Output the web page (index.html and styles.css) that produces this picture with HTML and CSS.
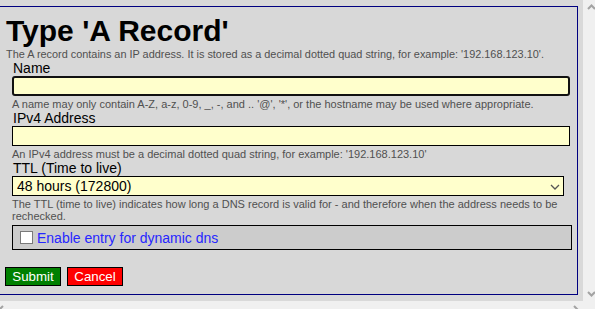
FILE: index.html
```html
<!DOCTYPE html>
<html lang="en">
<head>
    <meta charset="UTF-8">
    <title>Type 'A Record'</title>
    <link rel="stylesheet" href="styles.css">
</head>
<body>
    <div class="frame">
        <div class="viewport">
            <div class="panel">
                <h1>Type 'A Record'</h1>
                <p class="desc">The A record contains an IP address. It is stored as a decimal dotted quad string, for example: '192.168.123.10'.</p>

                <div class="fields">
                    <label class="field-label" for="name">Name</label>
                    <input type="text" id="name" class="field-input focused">
                    <p class="help">A name may only contain A-Z, a-z, 0-9, _, -, and .. '@', '*', or the hostname may be used where appropriate.</p>

                    <label class="field-label" for="ipv4">IPv4 Address</label>
                    <input type="text" id="ipv4" class="field-input">
                    <p class="help">An IPv4 address must be a decimal dotted quad string, for example: '192.168.123.10'</p>

                    <label class="field-label" for="ttl">TTL (Time to live)</label>
                    <div class="select-wrap">
                        <select id="ttl" class="field-select">
                            <option>48 hours (172800)</option>
                        </select>
                        <svg class="select-arrow" width="10" height="6" viewBox="0 0 10 6"><path d="M1 1 L5 5 L9 1" fill="none" stroke="#555" stroke-width="1.3"/></svg>
                    </div>
                    <p class="help">The TTL (time to live) indicates how long a DNS record is valid for - and therefore when the address needs to be rechecked.</p>

                    <div class="check-box">
                        <input type="checkbox" id="dyndns" class="check">
                        <label for="dyndns" class="check-label">Enable entry for dynamic dns</label>
                    </div>
                </div>

                <div class="actions">
                    <button class="btn btn-submit">Submit</button>
                    <button class="btn btn-cancel">Cancel</button>
                </div>
            </div>
        </div>

        <!-- barre de défilement verticale -->
        <div class="vscroll">
            <svg width="17" height="13" viewBox="0 0 17 13"><path d="M5 9 L8.5 5.5 L12 9" fill="none" stroke="#a3a3a3" stroke-width="2"/></svg>
            <svg width="17" height="13" viewBox="0 0 17 13"><path d="M5 4 L8.5 7.5 L12 4" fill="none" stroke="#a3a3a3" stroke-width="2"/></svg>
        </div>

        <!-- barre de défilement horizontale -->
        <div class="hscroll">
            <svg width="13" height="17" viewBox="0 0 13 17"><path d="M9 5 L5.5 8.5 L9 12" fill="none" stroke="#a3a3a3" stroke-width="2"/></svg>
            <svg width="13" height="17" viewBox="0 0 13 17"><path d="M4 5 L7.5 8.5 L4 12" fill="none" stroke="#a3a3a3" stroke-width="2"/></svg>
        </div>
        <div class="corner"></div>
    </div>
</body>
</html>
```

FILE: styles.css
```css
body {
    margin: 0;
    width: 595px;
    height: 309px;
    overflow: hidden;
    font-family: "Liberation Sans", Arial, sans-serif;
    background-color: #f0f0f0;
}
.frame {
    display: grid;
    grid-template-columns: 583px 17px;
    grid-template-rows: 301px 17px;
}
.viewport {
    background-color: #d9d9d9;
    overflow: hidden;
    padding-top: 6px;
}
.panel {
    box-sizing: border-box;
    width: 580px;
    margin-left: -2px;
    border: 1px solid #000080;
    padding: 7px 6px 8px 7px;
    background-color: #d8d8d8;
}
h1 {
    margin: 0;
    font-size: 30px;
    line-height: 34px;
    font-weight: bold;
    color: #000;
}
.desc {
    margin: 0;
    font-size: 10.9px;
    line-height: 12px;
    color: #505050;
}
.fields {
    margin-left: 6px;
}
.field-label {
    display: block;
    padding-left: 1px;
    font-size: 14px;
    line-height: 16px;
    color: #000;
}
.field-input {
    display: block;
    box-sizing: border-box;
    width: 558px;
    height: 20px;
    margin: 0;
    border: 1px solid #000;
    background-color: #ffffcc;
    outline: none;
}
.field-input.focused {
    border: 2px solid #111;
    border-radius: 3px;
}
.help {
    margin: 2px 0 0 0;
    font-size: 11px;
    line-height: 12px;
    color: #505050;
}
.select-wrap {
    position: relative;
    width: 552px;
}
.field-select {
    display: block;
    box-sizing: border-box;
    width: 552px;
    height: 20px;
    margin: 0;
    padding: 0 0 0 4px;
    border: 1px solid #000;
    border-radius: 0;
    background-color: #ffffcc;
    font-family: "Liberation Sans", Arial, sans-serif;
    font-size: 14px;
    color: #000;
    appearance: none;
    -webkit-appearance: none;
}
.select-arrow {
    position: absolute;
    right: 4px;
    top: 8px;
}
.check-box {
    box-sizing: border-box;
    display: flex;
    align-items: center;
    gap: 4px;
    width: 560px;
    height: 25px;
    margin-top: 3px;
    padding-left: 7px;
    border: 1px solid #000;
    background-color: #cccccc;
}
.check {
    appearance: none;
    -webkit-appearance: none;
    box-sizing: border-box;
    width: 13px;
    height: 13px;
    margin: 0;
    border: 1px solid #7a7a7a;
    background-color: #fff;
}
.check-label {
    font-size: 14px;
    color: #2626ff;
}
.actions {
    display: flex;
    gap: 6px;
    margin-top: 17px;
    margin-left: -1px;
}
.btn {
    box-sizing: border-box;
    width: 56px;
    height: 19px;
    padding: 0;
    border: 1px solid #000;
    color: #fff;
    font-family: "Liberation Sans", Arial, sans-serif;
    font-size: 13.3px;
    line-height: 17px;
}
.btn-submit {
    background-color: #008000;
}
.btn-cancel {
    background-color: #ff0000;
}
.vscroll {
    display: flex;
    flex-direction: column;
    justify-content: space-between;
    background-color: #f0f0f0;
}
.hscroll {
    display: flex;
    justify-content: space-between;
    margin-left: -6px;
    background-color: #f0f0f0;
}
.corner {
    background-color: #f0f0f0;
}
```
